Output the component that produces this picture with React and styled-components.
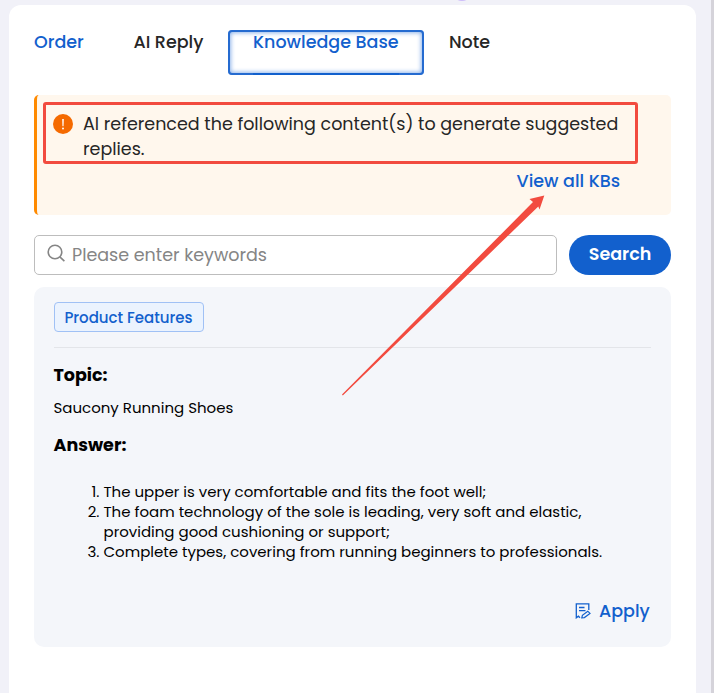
import React from "react";
import styled, { createGlobalStyle } from "styled-components";

const GlobalStyle = createGlobalStyle`
  * {
    box-sizing: border-box;
  }

  body {
    margin: 0;
    background-color: #f1f1f8;
    font-family: Poppins, Inter, "Open Sans", sans-serif;
    color: #262626;
    overflow: hidden;
  }
`;

const Page = styled.div`
  position: relative;
  display: flex;
  justify-content: space-between;
  height: 693px;
  padding: 5px 0 0 9px;
`;

const Panel = styled.main`
  width: 687px;
  height: 700px;
  padding: 25px 25px 0;
  background-color: #fff;
  border-radius: 12px 12px 0 0;
`;

const ScrollTrack = styled.div`
  width: 3px;
  height: 693px;
  margin-top: -5px;
  background-color: #d5d3da;
`;

const Avatar = styled.div`
  position: absolute;
  top: -19px;
  left: 452px;
  width: 20px;
  height: 20px;
  border-radius: 50%;
  background-color: #cdbcfa;
`;

const Tabs = styled.nav`
  display: flex;
  height: 45px;
  margin-left: -25px;
`;

const Tab = styled.a`
  width: ${({ $width }) => $width}px;
  padding: 0 25px;
  font-size: 17.5px;
  font-weight: 500;
  line-height: 24px;
  white-space: nowrap;
  color: ${({ $blue }) => ($blue ? "#1260cd" : "#262626")};
  ${({ $active }) =>
    $active &&
    `
    border-radius: 4px;
    box-shadow: inset 0 0 0 2px #256bd0, inset 0 0 4px 3px #8fb4ea;

    &::after {
      content: "";
      display: block;
      height: 2px;
      margin-top: 19px;
      background-color: #1260cd;
    }
  `}
`;

const Notice = styled.section`
  height: 120px;
  margin-top: 20px;
  padding: 7px 33px 0 6px;
  background-color: #fff7ed;
  border-left: 3px solid #ff8a00;
  border-radius: 5px;
`;

const NoticeMessage = styled.div`
  display: flex;
  gap: 10px;
  height: 62px;
  padding: 7px 0 0 7px;
  border: 3px solid #f24b3f;
  border-radius: 3px;
  font-size: 17.5px;
  line-height: 25px;

  svg {
    flex: none;
    margin-top: 2px;
  }

  p {
    margin: 0;
  }
`;

const ViewAll = styled.a`
  display: block;
  width: 104px;
  margin: 4px 17.5px 0 auto;
  font-size: 17.5px;
  font-weight: 500;
  line-height: 26px;
  white-space: nowrap;
  color: #1260cd;
`;

const SearchRow = styled.div`
  display: flex;
  gap: 12px;
  margin-top: 20px;
`;

const SearchField = styled.div`
  flex: 1;
  display: flex;
  align-items: center;
  gap: 6px;
  height: 40px;
  padding-left: 12px;
  border: 1px solid #bdbdbd;
  border-radius: 5px;
  font-size: 17.5px;
  color: #858585;

  svg {
    margin-top: -3px;
  }
`;

const SearchButton = styled.button`
  width: 102px;
  height: 40px;
  padding: 0 0 2px;
  border: 0;
  border-radius: 20px;
  background-color: #1260cd;
  color: #fff;
  font: 600 17.5px Poppins, Inter, sans-serif;
`;

const ResultCard = styled.article`
  display: flex;
  flex-direction: column;
  height: 360px;
  margin-top: 12px;
  padding: 15px 20px 0;
  background-color: #f4f6fa;
  border-radius: 10px;
  color: #000;
`;

const TagRow = styled.div`
  height: 46px;
  border-bottom: 1px solid #e3e5e9;
`;

const Tag = styled.span`
  display: block;
  width: 150px;
  height: 30px;
  padding-right: 1px;
  border: 1px solid #a0c1f5;
  border-radius: 4px;
  background-color: #ebf3fe;
  color: #1260cd;
  font-size: 15px;
  font-weight: 500;
  line-height: 29px;
  text-align: center;
`;

const Heading = styled.h3`
  margin: ${({ $top }) => $top}px 0 0 -0.5px;
  font-size: 17.5px;
  font-weight: 700;
  line-height: 24px;
`;

const TopicText = styled.p`
  margin: 11px 0 0 -0.5px;
  font-size: 15px;
  line-height: 20px;
`;

const AnswerList = styled.ol`
  margin: 25px 0 0;
  padding-left: 49.5px;
  font-size: 15px;
  line-height: 20px;
`;

const AnswerItem = styled.li`
  white-space: nowrap;
`;

const ApplyLink = styled.a`
  display: flex;
  align-items: center;
  gap: 8px;
  width: 76px;
  margin: 37px 0 0 auto;
  font-size: 17.5px;
  font-weight: 500;
  line-height: 24px;
  color: #1260cd;

  svg {
    flex: none;
  }
`;

const Arrow = styled.svg`
  position: absolute;
  top: 190px;
  left: 336px;
  pointer-events: none;
`;

const WarningIcon = () => (
  <svg width="20" height="20" viewBox="0 0 20 20">
    <circle cx="10" cy="10" r="10" fill="#f56a00" />
    <path d="M9.2 5h1.6l-.25 7.2h-1.1z" fill="#fff" />
    <circle cx="10" cy="14.4" r="1" fill="#fff" />
  </svg>
);

const SearchIcon = () => (
  <svg width="19" height="19" viewBox="0 0 19 19" fill="none" stroke="#858585">
    <circle cx="8" cy="8" r="6.8" strokeWidth="1.6" />
    <path d="M12.8 12.8l4.6 4.4" strokeWidth="1.6" />
  </svg>
);

const ApplyIcon = () => (
  <svg
    width="16"
    height="16"
    viewBox="0 0 16 16"
    fill="none"
    stroke="#1260cd"
    strokeWidth="1.3"
  >
    <path d="M13.8 7V.8H1.3v14l2.1-1.6 1.6 1.5" />
    <path d="M4 4.5h5.5M4 7.6h6.5" />
    <path d="M6.8 14.8l.6-2.5 5.4-4.1 2.2 2.2-5.6 4.2z" strokeWidth="1.2" />
  </svg>
);

const App = () => {
  return (
    <>
      <GlobalStyle />
      <Page>
        <Avatar />
        <Panel>
          <Tabs>
            <Tab $width={99.5} $blue>
              Order
            </Tab>
            <Tab $width={119.5}>AI Reply</Tab>
            <Tab $width={196} $blue $active>
              Knowledge Base
            </Tab>
            <Tab $width={92}>Note</Tab>
          </Tabs>
          <Notice>
            <NoticeMessage>
              <WarningIcon />
              <p>
                AI referenced the following content(s) to generate suggested
                <br />
                replies.
              </p>
            </NoticeMessage>
            <ViewAll>View all KBs</ViewAll>
          </Notice>
          <SearchRow>
            <SearchField>
              <SearchIcon />
              <span>Please enter keywords</span>
            </SearchField>
            <SearchButton>Search</SearchButton>
          </SearchRow>
          <ResultCard>
            <TagRow>
              <Tag>Product Features</Tag>
            </TagRow>
            <Heading $top={15}>Topic:</Heading>
            <TopicText>Saucony Running Shoes</TopicText>
            <Heading $top={15}>Answer:</Heading>
            <AnswerList>
              <AnswerItem>
                The upper is very comfortable and fits the foot well;
              </AnswerItem>
              <AnswerItem>
                The foam technology of the sole is leading, very soft and
                elastic,
                <br />
                providing good cushioning or support;
              </AnswerItem>
              <AnswerItem>
                Complete types, covering from running beginners to
                professionals.
              </AnswerItem>
            </AnswerList>
            <ApplyLink>
              <ApplyIcon />
              Apply
            </ApplyLink>
          </ResultCard>
        </Panel>
        <ScrollTrack />
        <Arrow width="214" height="212" viewBox="336 190 214 212">
          <path
            d="M342 394.5L533 202L529.5 199L544.3 195.6L539.5 209.5L538.3 206.5L342.8 395.6Z"
            fill="#f24b3f"
          />
        </Arrow>
      </Page>
    </>
  );
};

export default App;
